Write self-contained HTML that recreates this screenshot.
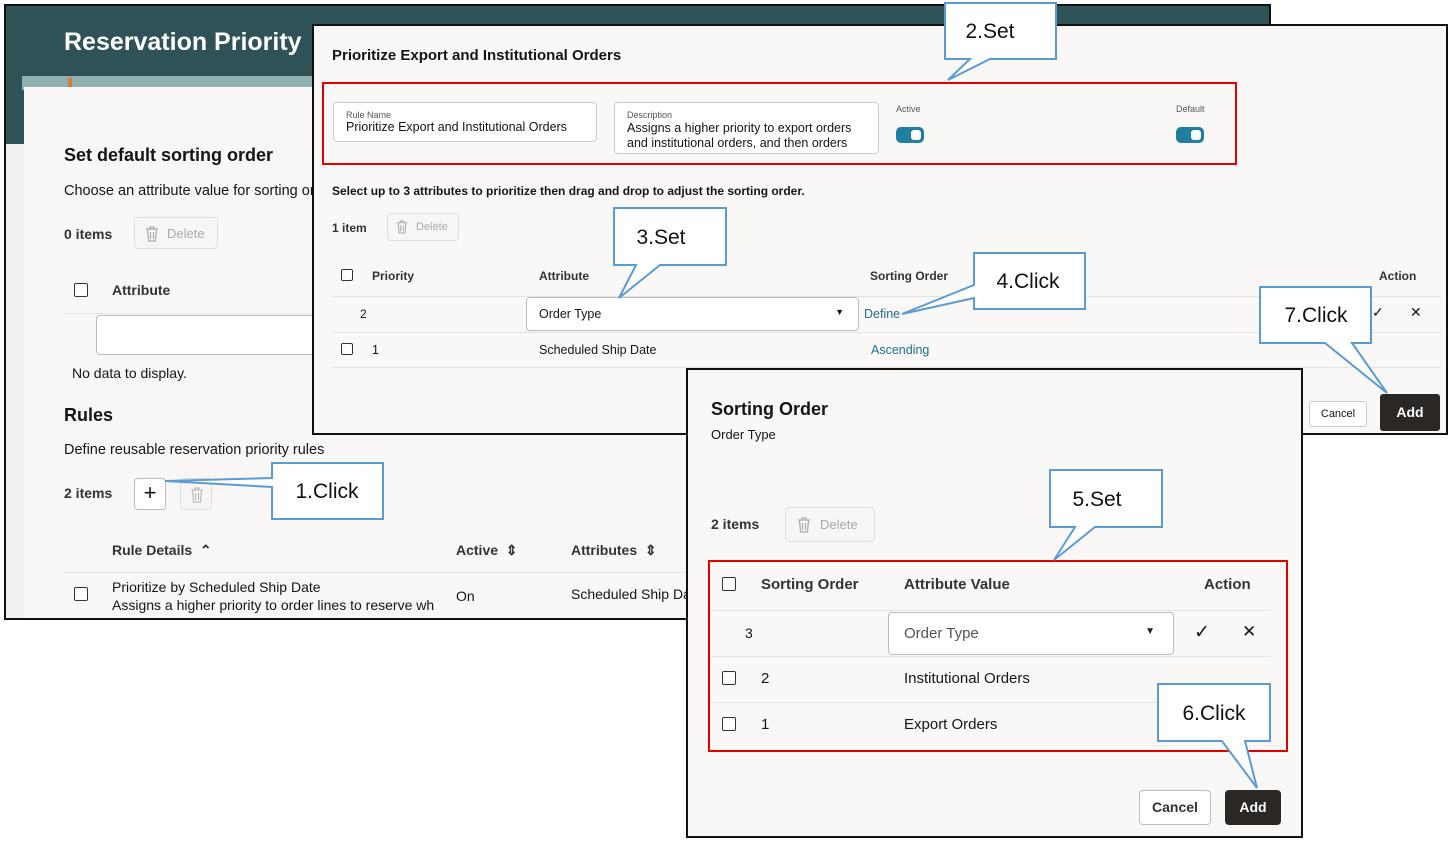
<!DOCTYPE html>
<html><head><meta charset="utf-8"><style>
*{box-sizing:border-box;margin:0;padding:0}
body{width:1456px;height:844px;background:#fff;position:relative;overflow:hidden;font-family:"Liberation Sans",sans-serif;color:#161513}
.a{position:absolute;white-space:nowrap}
.cb{position:absolute;width:14px;height:14px;border:1.5px solid #333;border-radius:2px;background:#fff}
.btn{position:absolute;border:1px solid #ddd;border-radius:4px;background:#f7f6f4;color:#aaa}
.btn svg{position:absolute}
.line{position:absolute;height:1px;background:#e6e4e1}
.lnk{color:#1f6e8c}
</style></head><body>

<!-- Panel 1 -->
<div class="a" style="left:4px;top:4px;width:1267px;height:616px;border:2px solid #111;background:#f1f0ee;overflow:hidden">
  <div class="a" style="left:0;top:0;width:1263px;height:138px;background:#2f5257"></div>
  <div class="a" style="left:16px;top:70px;width:300px;height:14px;background:#8fb0ae"></div>
  <div class="a" style="left:62px;top:72px;width:4px;height:12px;background:#d97a3a"></div>
  <div class="a" style="left:18px;top:81px;width:1260px;height:540px;background:#f8f7f5"></div>
  <div class="a" style="left:58px;top:22px;font-size:25px;font-weight:bold;color:#fff">Reservation Priority</div>
  <div class="a" style="left:58px;top:139px;font-size:18px;font-weight:bold">Set default sorting order</div>
  <div class="a" style="left:58px;top:177px;font-size:14.5px">Choose an attribute value for sorting or</div>
  <div class="a" style="left:58px;top:220px;font-size:14px;font-weight:bold;color:#333">0 items</div>
  <div class="btn" style="left:128px;top:211px;width:84px;height:32px;font-size:13px;padding:8px 0 0 32px"><svg style="left:10px;top:8px" width="14" height="16" viewBox="0 0 14 16" fill="none" stroke="#aaa" stroke-width="1.2"><path d="M1 3h12M5 3V1h4v2M2.5 3l1 12h7l1-12M5.5 6v7M8.5 6v7"/></svg>Delete</div>
  <div class="cb" style="left:68px;top:277px"></div>
  <div class="a" style="left:106px;top:276px;font-size:14px;font-weight:bold;color:#333">Attribute</div>
  <div class="line" style="left:58px;top:307px;width:260px"></div>
  <div class="a" style="left:90px;top:309px;width:240px;height:40px;border:1px solid #bbb;border-radius:4px;background:#fff"></div>
  <div class="a" style="left:66px;top:359px;font-size:14px">No data to display.</div>
  <div class="a" style="left:58px;top:399px;font-size:18px;font-weight:bold">Rules</div>
  <div class="a" style="left:58px;top:436px;font-size:14.5px">Define reusable reservation priority rules</div>
  <div class="a" style="left:58px;top:479px;font-size:14px;font-weight:bold;color:#333">2 items</div>
  <div class="a" style="left:128px;top:472px;width:32px;height:32px;border:1px solid #bbb;border-radius:4px;background:#fff;font-size:22px;text-align:center;line-height:28px">+</div>
  <div class="btn" style="left:174px;top:472px;width:32px;height:32px"><svg style="left:9px;top:8px" width="14" height="16" viewBox="0 0 14 16" fill="none" stroke="#bbb" stroke-width="1.2"><path d="M1 3h12M5 3V1h4v2M2.5 3l1 12h7l1-12M5.5 6v7M8.5 6v7"/></svg></div>
  <div class="a" style="left:106px;top:536px;font-size:14px;font-weight:bold;color:#333">Rule Details &nbsp;⌃</div>
  <div class="a" style="left:450px;top:536px;font-size:14px;font-weight:bold;color:#333">Active &nbsp;⇕</div>
  <div class="a" style="left:565px;top:536px;font-size:14px;font-weight:bold;color:#333">Attributes &nbsp;⇕</div>
  <div class="line" style="left:58px;top:566px;width:700px"></div>
  <div class="cb" style="left:68px;top:581px"></div>
  <div class="a" style="left:106px;top:572px;font-size:14px;line-height:18px">Prioritize by Scheduled Ship Date<br>Assigns a higher priority to order lines to reserve wh</div>
  <div class="a" style="left:450px;top:582px;font-size:14px">On</div>
  <div class="a" style="left:565px;top:580px;font-size:14px">Scheduled Ship Da</div>
</div>

<!-- Dialog 2 -->
<div class="a" style="left:312px;top:24px;width:1136px;height:411px;border:2px solid #111;background:#f9f8f6;overflow:hidden">
  <div class="a" style="left:18px;top:21px;font-size:15px;font-weight:bold">Prioritize Export and Institutional Orders</div>
  <div class="a" style="left:19px;top:76px;width:264px;height:40px;border:1px solid #ccc;border-radius:4px;background:#fff;padding:7px 12px 0">
    <div style="font-size:9px;color:#555">Rule Name</div><div style="font-size:12.5px">Prioritize Export and Institutional Orders</div></div>
  <div class="a" style="left:300px;top:76px;width:265px;height:52px;border:1px solid #ccc;border-radius:4px;background:#fff;padding:7px 12px 0;line-height:15px">
    <div style="font-size:9px;color:#555;line-height:11px">Description</div><div style="font-size:12.5px">Assigns a higher priority to export orders<br>and institutional orders, and then orders</div></div>
  <div class="a" style="left:582px;top:78px;font-size:9px;color:#555">Active</div>
  <div class="a" style="left:582px;top:101px;width:28px;height:16px;border-radius:5px;background:#227e9e"><div style="position:absolute;right:3px;top:3px;width:10px;height:10px;background:#fff;border-radius:3px"></div></div>
  <div class="a" style="left:862px;top:78px;font-size:9px;color:#555">Default</div>
  <div class="a" style="left:862px;top:101px;width:28px;height:16px;border-radius:5px;background:#227e9e"><div style="position:absolute;right:3px;top:3px;width:10px;height:10px;background:#fff;border-radius:3px"></div></div>
  <div class="a" style="left:18px;top:158px;font-size:12px;font-weight:bold">Select up to 3 attributes to prioritize then drag and drop to adjust the sorting order.</div>
  <div class="a" style="left:18px;top:195px;font-size:12px;font-weight:bold;color:#333">1 item</div>
  <div class="btn" style="left:73px;top:187px;width:72px;height:28px;font-size:11px;padding:7px 0 0 28px"><svg style="left:8px;top:6px" width="12" height="14" viewBox="0 0 14 16" fill="none" stroke="#aaa" stroke-width="1.2"><path d="M1 3h12M5 3V1h4v2M2.5 3l1 12h7l1-12M5.5 6v7M8.5 6v7"/></svg>Delete</div>
  <div class="cb" style="left:27px;top:243px;width:12px;height:12px"></div>
  <div class="a" style="left:58px;top:243px;font-size:12px;font-weight:bold;color:#333">Priority</div>
  <div class="a" style="left:225px;top:243px;font-size:12px;font-weight:bold;color:#333">Attribute</div>
  <div class="a" style="left:556px;top:243px;font-size:12px;font-weight:bold;color:#333">Sorting Order</div>
  <div class="a" style="left:1065px;top:243px;font-size:12px;font-weight:bold;color:#333">Action</div>
  <div class="line" style="left:18px;top:270px;width:1110px"></div>
  <div class="a" style="left:46px;top:281px;font-size:12px">2</div>
  <div class="a" style="left:212px;top:271px;width:333px;height:34px;border:1px solid #bbb;border-radius:4px;background:#fff;font-size:12.5px;padding:9px 12px">Order Type<span style="position:absolute;right:14px;top:9px;font-size:9px">▼</span></div>
  <div class="a lnk" style="left:550px;top:281px;font-size:12.5px">Define</div>
  <div class="a" style="left:1058px;top:278px;font-size:14px">✓</div>
  <div class="a" style="left:1096px;top:278px;font-size:14px">✕</div>
  <div class="line" style="left:18px;top:306px;width:1110px"></div>
  <div class="cb" style="left:27px;top:317px;width:12px;height:12px"></div>
  <div class="a" style="left:58px;top:317px;font-size:12.5px">1</div>
  <div class="a" style="left:225px;top:317px;font-size:12.5px">Scheduled Ship Date</div>
  <div class="a lnk" style="left:557px;top:317px;font-size:12.5px">Ascending</div>
  <div class="line" style="left:18px;top:341px;width:1110px"></div>
  <div class="a" style="left:995px;top:375px;width:58px;height:26px;border:1px solid #ccc;border-radius:3px;background:#fff;font-size:11px;text-align:center;line-height:24px">Cancel</div>
  <div class="a" style="left:1066px;top:368px;width:60px;height:37px;border-radius:3px;background:#2a2725;color:#fff;font-weight:bold;font-size:14px;text-align:center;line-height:37px">Add</div>
</div>

<!-- Dialog 3 -->
<div class="a" style="left:686px;top:368px;width:617px;height:470px;border:2px solid #111;background:#f9f8f6;overflow:hidden">
  <div class="a" style="left:23px;top:29px;font-size:18px;font-weight:bold">Sorting Order</div>
  <div class="a" style="left:23px;top:57px;font-size:13px">Order Type</div>
  <div class="a" style="left:23px;top:146px;font-size:14px;font-weight:bold;color:#333">2 items</div>
  <div class="btn" style="left:97px;top:137px;width:90px;height:35px;font-size:13px;padding:9px 0 0 34px"><svg style="left:11px;top:9px" width="14" height="16" viewBox="0 0 14 16" fill="none" stroke="#aaa" stroke-width="1.2"><path d="M1 3h12M5 3V1h4v2M2.5 3l1 12h7l1-12M5.5 6v7M8.5 6v7"/></svg>Delete</div>
  <div class="cb" style="left:34px;top:207px"></div>
  <div class="a" style="left:73px;top:206px;font-size:15px;font-weight:bold;color:#333">Sorting Order</div>
  <div class="a" style="left:216px;top:206px;font-size:15px;font-weight:bold;color:#333">Attribute Value</div>
  <div class="a" style="left:516px;top:206px;font-size:15px;font-weight:bold;color:#333">Action</div>
  <div class="line" style="left:23px;top:240px;width:560px"></div>
  <div class="a" style="left:57px;top:255px;font-size:14px">3</div>
  <div class="a" style="left:200px;top:242px;width:286px;height:43px;border:1px solid #bbb;border-radius:4px;background:#fff;font-size:15px;color:#555;padding:12px 15px">Order Type<span style="position:absolute;right:18px;top:13px;font-size:10px;color:#222">▼</span></div>
  <div class="a" style="left:506px;top:251px;font-size:19px">✓</div>
  <div class="a" style="left:554px;top:252px;font-size:17px">✕</div>
  <div class="line" style="left:23px;top:286px;width:560px"></div>
  <div class="cb" style="left:34px;top:301px"></div>
  <div class="a" style="left:73px;top:300px;font-size:15px">2</div>
  <div class="a" style="left:216px;top:300px;font-size:15px">Institutional Orders</div>
  <div class="line" style="left:23px;top:332px;width:560px"></div>
  <div class="cb" style="left:34px;top:347px"></div>
  <div class="a" style="left:73px;top:346px;font-size:15px">1</div>
  <div class="a" style="left:216px;top:346px;font-size:15px">Export Orders</div>
  <div class="a" style="left:451px;top:420px;width:72px;height:35px;border:1px solid #bbb;border-radius:4px;background:#fff;font-size:14px;font-weight:bold;color:#333;text-align:center;line-height:33px">Cancel</div>
  <div class="a" style="left:537px;top:420px;width:56px;height:35px;border-radius:4px;background:#2a2725;color:#fff;font-size:14px;font-weight:bold;text-align:center;line-height:35px">Add</div>
</div>

<!-- Red boxes -->
<div class="a" style="left:322px;top:82px;width:915px;height:83px;border:2px solid #e50000"></div>
<div class="a" style="left:708px;top:560px;width:580px;height:192px;border:2px solid #e50000"></div>

<!-- Callouts -->
<svg class="a" style="left:0;top:0" width="1456" height="844" viewBox="0 0 1456 844">
<g fill="#fff" stroke="#5b9bd5" stroke-width="2">
<path d="M272,463 H383 V519 H272 V487 L165,481 L272,478 Z"/>
<path d="M945,3 H1056 V59 H990 L948,80 L970,59 H945 Z"/>
<path d="M614,208 H726 V265 H660 L619,298 L636,265 H614 Z"/>
<path d="M974,253 H1085 V309 H974 V298 L902,314 L974,285 Z"/>
<path d="M1050,470 H1162 V527 H1095 L1054,560 L1075,527 H1050 Z"/>
<path d="M1158,684 H1270 V741 H1245 L1257,788 L1222,741 H1158 Z"/>
<path d="M1260,287 H1371 V343 H1352 L1387,393 L1325,343 H1260 Z"/>
</g>
<g font-family="Liberation Sans, sans-serif" font-size="21" fill="#111" text-anchor="middle">
<text x="327" y="498">1.Click</text>
<text x="990" y="38">2.Set</text>
<text x="661" y="244">3.Set</text>
<text x="1028" y="288">4.Click</text>
<text x="1097" y="506">5.Set</text>
<text x="1214" y="720">6.Click</text>
<text x="1316" y="322">7.Click</text>
</g>
</svg>
</body></html>
